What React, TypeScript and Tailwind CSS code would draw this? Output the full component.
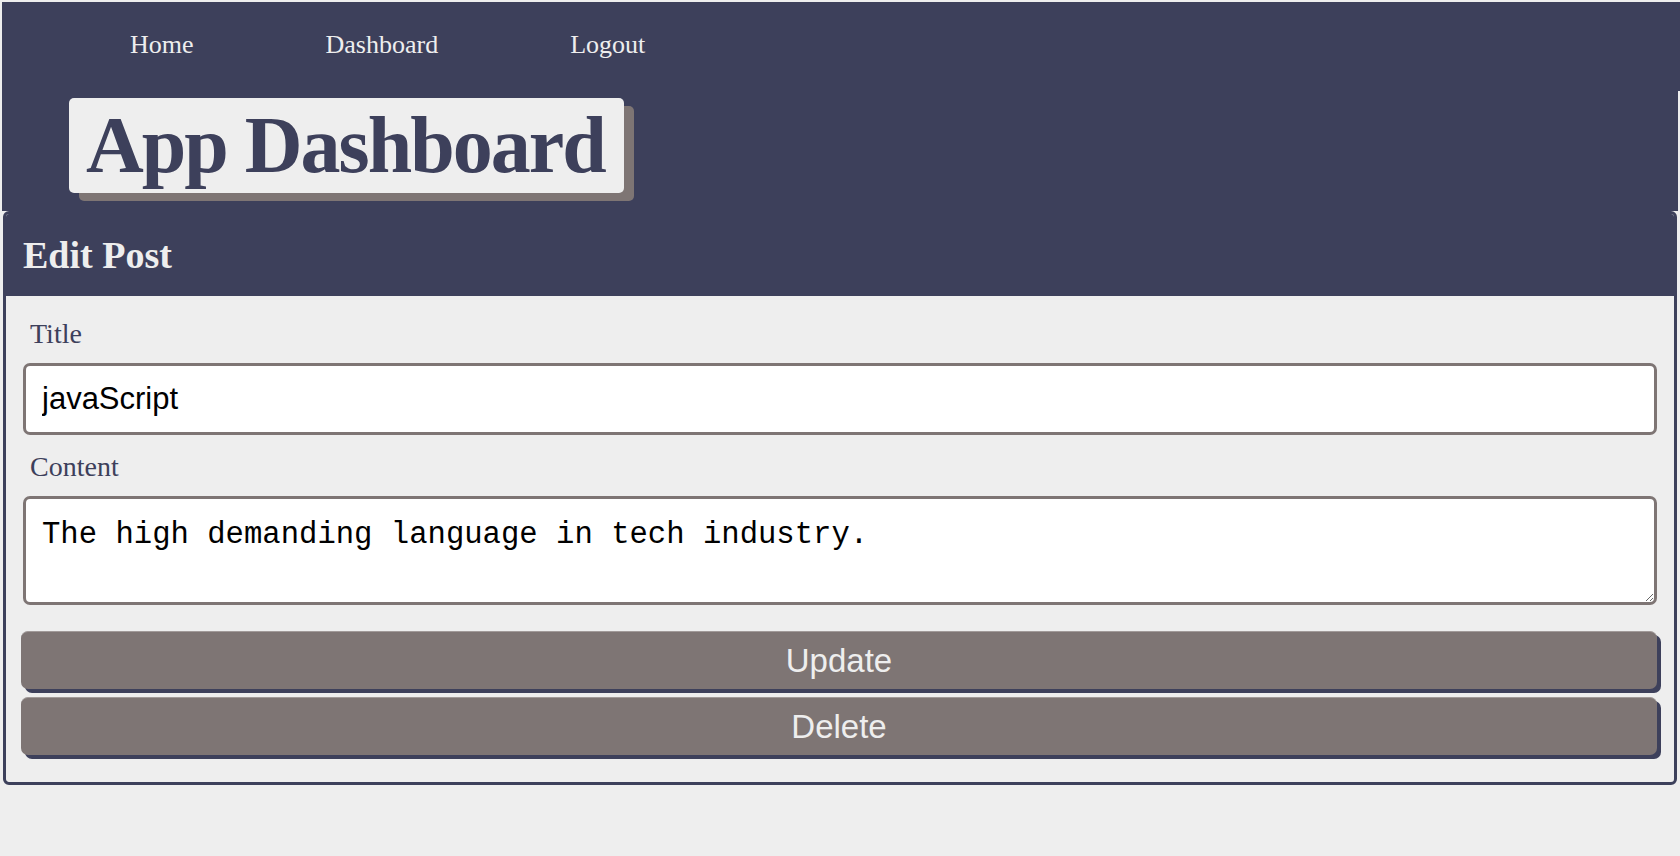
export default function App() {
  return (
    <div className="min-h-screen bg-[#eeeeee] pt-[2px] pl-[2px] font-['Liberation_Serif',serif]">
      <header>
        <nav className="flex h-[89px] gap-[132px] bg-[#3d405b] pl-[128px] pt-[29px]">
          <a className="text-[26px] leading-[28px] text-[#eeeeee]" href="#">Home</a>
          <a className="text-[26px] leading-[28px] text-[#eeeeee]" href="#">Dashboard</a>
          <a className="text-[26px] leading-[28px] text-[#eeeeee]" href="#">Logout</a>
        </nav>
        <div className="mr-[2px] h-[120px] bg-[#3d405b] pl-[67px] pt-[7px]">
          <h1 className="inline-block rounded-[5px] bg-[#eeeeee] pb-[8px] pl-[17px] pr-[19px] pt-[7px] text-[80px] font-bold leading-[80px] tracking-[-2px] text-[#3d405b] shadow-[10px_8px_0_#7e7574]">
            App Dashboard
          </h1>
        </div>
      </header>

      <section className="ml-[1px] mr-[3px] overflow-hidden rounded-[6px] border-[3px] border-[#3d405b] bg-[#eeeeee]">
        <div className="flex h-[82px] items-center bg-[#3d405b] pl-[17px]">
          <h2 className="text-[38px] font-bold leading-[44px] text-[#eeeeee]">Edit Post</h2>
        </div>

        <form className="flex flex-col px-[17px] pb-[27px] pt-[6px]" onSubmit={(e) => e.preventDefault()}>
          <label className="mb-[14px] ml-[7px] mt-[16px] text-[28px] leading-[31px] text-[#3d405b]" htmlFor="title">
            Title
          </label>
          <input
            id="title"
            className="h-[72px] w-full rounded-[7px] border-[3px] border-[#7e7574] bg-white px-[16px] font-['Liberation_Sans',Arial,sans-serif] text-[31px] text-black outline-none"
            defaultValue="javaScript"
          />

          <label className="mb-[14px] ml-[7px] mt-[16px] text-[28px] leading-[31px] text-[#3d405b]" htmlFor="content">
            Content
          </label>
          <textarea
            id="content"
            className="h-[109px] w-full rounded-[7px] border-[3px] border-[#7e7574] bg-white px-[16px] pt-[19px] font-['Liberation_Mono','Courier_New',monospace] text-[30.6px] leading-[34px] text-black outline-none"
            defaultValue="The high demanding language in tech industry."
          />

          <button
            type="button"
            className="-ml-[2px] mt-[26px] flex h-[58px] w-[calc(100%+2px)] items-center justify-center rounded-[7px] border-t border-[#a19a99] bg-[#7e7574] font-['Liberation_Sans',Arial,sans-serif] text-[33px] text-[#eeeeee] shadow-[4px_4px_0_#3d405b]"
          >
            Update
          </button>
          <button
            type="button"
            className="-ml-[2px] mt-[8px] flex h-[58px] w-[calc(100%+2px)] items-center justify-center rounded-[7px] border-t border-[#a19a99] bg-[#7e7574] font-['Liberation_Sans',Arial,sans-serif] text-[33px] text-[#eeeeee] shadow-[4px_4px_0_#3d405b]"
          >
            Delete
          </button>
        </form>
      </section>
    </div>
  );
}
